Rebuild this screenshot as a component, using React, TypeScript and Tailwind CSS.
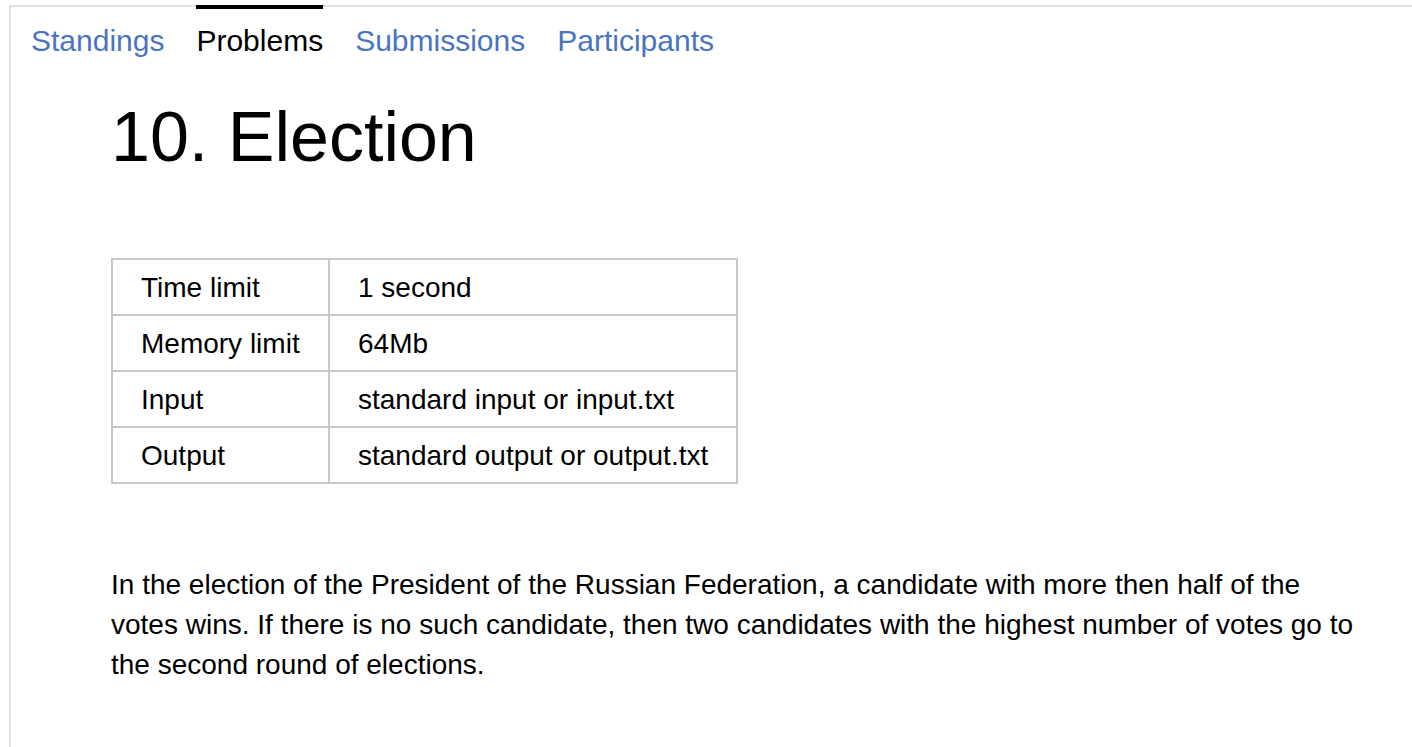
const tabs = [
  { name: "Standings", active: false },
  { name: "Problems", active: true },
  { name: "Submissions", active: false },
  { name: "Participants", active: false },
];

const limits = [
  ["Time limit", "1 second"],
  ["Memory limit", "64Mb"],
  ["Input", "standard input or input.txt"],
  ["Output", "standard output or output.txt"],
];

const App = () => {
  return (
    <div className="min-h-screen bg-white pt-[5px] pl-[9px] font-['Liberation_Sans',Arial,sans-serif] text-black">
      <div className="min-h-[742px] border-t-2 border-l-2 border-[#e0e0e0]">
        <nav className="-mt-[2px] flex gap-[32px] pl-[20px]">
          {tabs.map((tab) => (
            <a
              key={tab.name}
              href="#"
              className={`border-t-4 pt-[15px] text-[30px] leading-[34px] ${
                tab.active
                  ? "border-black text-black"
                  : "border-transparent text-[#4a74bf]"
              }`}
            >
              {tab.name}
            </a>
          ))}
        </nav>

        <div className="pl-[100px] pr-[48px]">
          <h1 className="mt-[39px] text-[70px] leading-[80px] font-normal">
            10. Election
          </h1>

          <table className="mt-[81px] w-[625px] table-fixed border-collapse text-[28px] leading-[32px]">
            <colgroup>
              <col className="w-[217px]" />
              <col className="w-[408px]" />
            </colgroup>
            <tbody>
              {limits.map(([label, value]) => (
                <tr key={label} className="h-[56px]">
                  <td className="border-2 border-[#c8c8c8] px-[28px] pt-[2px] pb-0">
                    {label}
                  </td>
                  <td className="border-2 border-[#c8c8c8] pl-[28px] pr-[20px] pt-[2px] pb-0">
                    {value}
                  </td>
                </tr>
              ))}
            </tbody>
          </table>

          <p className="mt-[81px] text-[28px] leading-[40px]">
            In the election of the President of the Russian Federation, a
            candidate with more then half of the votes wins. If there is no such
            candidate, then two candidates with the highest number of votes go
            to the second round of elections.
          </p>
        </div>
      </div>
    </div>
  );
};

export default App;
